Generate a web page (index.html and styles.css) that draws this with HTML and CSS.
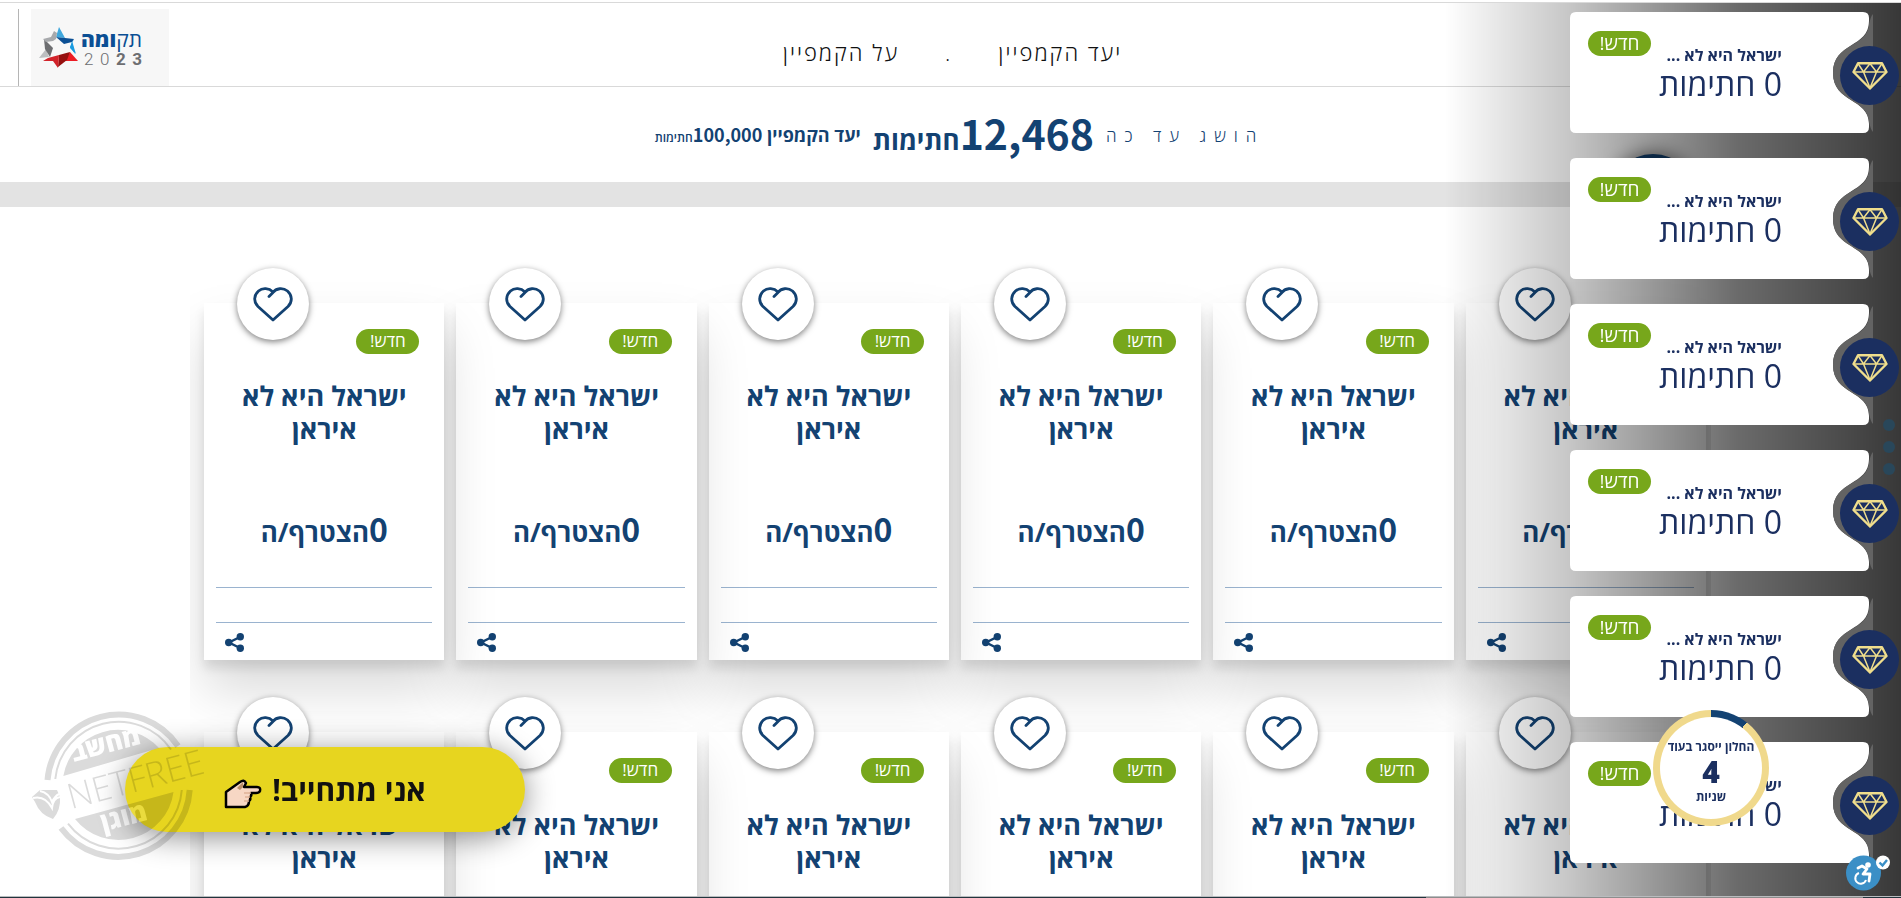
FILE: index.html
```html
<!DOCTYPE html>
<html lang="he" dir="rtl">
<head>
    <meta charset="UTF-8">
    <meta name="viewport" content="width=device-width, initial-scale=1.0">
    <title>תקומה 2023</title>
    <link rel="stylesheet" href="styles.css">
</head>
<body>
    <svg class="defs" aria-hidden="true">
        <symbol id="icon-heart" viewBox="0 0 40 35">
            <path d="M16 9.500L20 5.500C23 1 30 0.500 34.500 4C39.500 8.500 39.500 15 35 19.500L20 33L5 19.500C0.500 15 0.500 8.500 5.500 4C9.500 0.500 16 1 20 5" fill="none" stroke="currentColor" stroke-width="2.800" stroke-linejoin="round" stroke-linecap="round"/>
        </symbol>
        <symbol id="icon-share" viewBox="0 0 19 19">
            <path d="M15 4L4 9.500L15 15" fill="none" stroke="currentColor" stroke-width="2.500"/>
            <circle cx="15.300" cy="3.700" r="3.700"/><circle cx="3.700" cy="9.500" r="3.700"/><circle cx="15.300" cy="15.300" r="3.700"/>
        </symbol>
        <symbol id="icon-diamond" viewBox="0 0 36 28">
            <path d="M6 1.200H30L34.500 10L18 26.500L1.500 10Z" fill="none" stroke="currentColor" stroke-width="2.400" stroke-linejoin="round"/>
            <path d="M2 10H34M6 1.500L11.500 10L18 1.500L24.500 10L30 1.500M11.500 10L18 26L24.500 10" fill="none" stroke="currentColor" stroke-width="1.500"/>
        </symbol>
        <symbol id="ticket" viewBox="0 0 303 121">
            <path d="M6 0H293Q299 0 299 6V9C299 36 263 30 263 61C263 91 299 86 299 112V115Q299 121 293 121H6Q0 121 0 115V6Q0 0 6 0Z" fill="#fff"/>
            <path d="M303 2C301 4 300 8 299 12C298 36 263 30 263 61C263 91 298 86 299 110C300 114 301 118 303 120Z" fill="#636363"/>
        </symbol>
    </svg>

    <header class="header">
        <nav class="nav">
            <a href="#goal">יעד הקמפיין</a>
            <span>.</span>
            <a href="#about">על הקמפיין</a>
        </nav>
        <a class="logo" href="#">
            <svg class="logo-star" viewBox="0 0 39 41" aria-hidden="true">
                <path d="M20 0L26 11L17 10Z" fill="#3fa7dc"/>
                <path d="M17 10L35 12L33 15L25 17Z" fill="#0b4f94"/>
                <path d="M35 12L31 20L36 27L33 15Z" fill="#1a9be0"/>
                <path d="M33 14L31 21L37 27Z" fill="#1a9be0"/>
                <path d="M31 25L39 34L26 34Z" fill="#ec1c24"/>
                <path d="M31 25L20 28L19 40L28 33Z" fill="#96100f"/>
                <path d="M4 34L9 31L20 28L19 41L14 34Z" fill="#d2232a"/>
                <path d="M7 22L0 31L10 30Z" fill="#bcbec0"/>
                <path d="M5 12L14 21L11 30L6 22Z" fill="#6d6e71"/>
                <path d="M4 12L12 10L15 4L18 6L17 12L14 14L7 15Z" fill="#a7a9ac"/>
            </svg>
            <span class="logo-text">
                <span class="logo-name"><span>תק</span>ומה</span>
                <span class="logo-year"><i>2</i><i>0</i><b>2</b><b>3</b></span>
            </span>
        </a>
    </header>

    <section class="stats" id="goal">
        <span class="stats-label">הושג עד כה</span>
        <strong class="stats-total"><span class="num">12,468</span>חתימות</strong>
        <strong class="stats-goal">יעד הקמפיין <span class="num">100,000</span><small>חתימות</small></strong>
    </section>
    <div class="band"></div>

    <main class="cards" id="cards"></main>

    <button class="cta" type="button">
        <span>אני מתחייב!</span>
        <svg class="cta-hand" viewBox="0 0 38 30" aria-hidden="true">
            <path d="M2 27V13L16 3Q20 0 22 4L20 8H33Q37 8 36 12Q35 14 32 14H27Q28 17 26 18Q27 21 25 22Q25 27 21 28H2Z" fill="#f7d7c4" stroke="#000" stroke-width="2.500" stroke-linejoin="round"/>
            <path d="M13 9L19 3L19 8L16 11Z" fill="#b98d68"/>
            <path d="M20 14H27M21 18H26M20 22H25" stroke="#e0b396" stroke-width="1.500"/>
        </svg>
    </button>

    <svg class="stamp" viewBox="0 0 180 150" aria-hidden="true" direction="ltr">
        <g fill="none" stroke="#000">
            <path d="M15.500 70A71.500 71.500 0 0 1 146 36" stroke-width="6"/>
            <path d="M157.700 80A71.500 71.500 0 0 1 29 118" stroke-width="6"/>
            <path d="M23.300 69A63.500 63.500 0 0 1 139 39.500" stroke-width="2"/>
            <path d="M149.800 80A63.500 63.500 0 0 1 36 113.600" stroke-width="2"/>
        </g>
        <path d="M31.300 66A55.500 55.500 0 0 1 127 38Z"/>
        <path d="M141.500 82A55.500 55.500 0 0 1 43 109Z"/>
        <path d="M8 80H25L28 87Q29 100 21 109Q8 105 3 92L0 87Z"/>
        <path d="M1 88Q13 85 20 98Q21 88 28 87M8 81Q17 83 20 92Q23 86 27 84" fill="none" stroke="#fff" stroke-width="2"/>
        <g transform="rotate(-15 83 74)">
            <text class="stamp-heb" x="84" y="42" text-anchor="middle">מחשב</text>
            <text class="stamp-net" x="34" y="87">NETFREE</text>
            <text class="stamp-heb" x="83" y="117" text-anchor="middle">מוגן</text>
        </g>
    </svg>

    <div class="menu-circle"></div>
    <aside class="panel" id="panel"></aside>
    <div class="side-dots"><i></i><i></i><i></i></div>

    <div class="timer">
        <div class="timer-inner">
            <span>החלון ייסגר בעוד</span>
            <b>4</b>
            <span>שניות</span>
        </div>
    </div>

    <button class="access" type="button" aria-label="נגישות">
        <svg viewBox="0 0 44 36" aria-hidden="true">
            <circle cx="17.500" cy="18" r="17.500" fill="#3b8fc6"/>
            <circle cx="22" cy="10" r="2.800" fill="#fff"/>
            <path d="M12 13L16 11L21 14L17 19H24L23 26" fill="none" stroke="#fff" stroke-width="2.800" stroke-linejoin="round" stroke-linecap="round"/>
            <path d="M13 18A5.500 5.500 0 1 0 20 25" fill="none" stroke="#fff" stroke-width="2"/>
            <circle cx="37" cy="7.500" r="7" fill="#fff"/>
            <path d="M33.500 7.500L36.500 10.500L41 5" fill="none" stroke="#3b8fc6" stroke-width="2.400"/>
        </svg>
    </button>

    <footer class="bottom-line"></footer>

    <script>
        const cards = document.getElementById('cards');
        const panel = document.getElementById('panel');

        for (let i = 0; i < 12; i++) {
            cards.innerHTML += `
                <article class="card">
                    <button class="like" type="button" aria-label="אהבתי"><svg><use href="#icon-heart"/></svg></button>
                    <span class="badge">חדש!</span>
                    <h3>ישראל היא לא איראן</h3>
                    <p class="joined"><span class="num">0</span>הצטרף/ה</p>
                    <div class="card-line"></div>
                    <div class="card-foot">
                        <button class="share" type="button" aria-label="שיתוף"><svg><use href="#icon-share"/></svg></button>
                    </div>
                </article>
            `;
        }

        for (let i = 0; i < 6; i++) {
            panel.innerHTML += `
                <div class="notice">
                    <svg class="notice-bg"><use href="#ticket"/></svg>
                    <span class="notice-icon"><svg><use href="#icon-diamond"/></svg></span>
                    <div class="notice-text">
                        <b>ישראל היא לא ...</b>
                        <span>0 חתימות</span>
                    </div>
                    <span class="badge">חדש!</span>
                </div>
            `;
        }
    </script>
</body>
</html>
```
FILE: styles.css
```css
* {
    box-sizing: border-box;
}
body {
    margin: 0;
    padding-top: 2px;
    height: 100vh;
    overflow: hidden;
    font-family: "Open Sans", sans-serif;
    background-color: #fff;
    color: #134272;
}
button {
    border: 0;
    padding: 0;
    background: none;
    font-family: inherit;
    color: inherit;
    cursor: pointer;
}
.defs {
    position: absolute;
    width: 0;
    height: 0;
}
.num {
    font-family: "Noto Sans CJK JP", sans-serif;
}

/* header */
.header {
    position: relative;
    display: flex;
    justify-content: center;
    align-items: center;
    height: 85px;
    border-top: 1px solid #d9d9d9;
    border-bottom: 1px solid #d9d9d9;
}
.nav {
    display: flex;
    gap: 46px;
    padding: 14px 0 0 4px;
    font-size: 22px;
    font-weight: 300;
    letter-spacing: 2px;
    color: #111;
}
.nav a {
    color: inherit;
    text-decoration: none;
}
.logo {
    position: absolute;
    left: 31px;
    bottom: 0;
    display: flex;
    align-items: center;
    gap: 6px;
    width: 138px;
    height: 77px;
    padding: 0 8px;
    background-color: #f7f7f7;
    text-decoration: none;
    direction: ltr;
}
.logo::before {
    content: "";
    position: absolute;
    left: -13px;
    top: 0;
    bottom: 0;
    border-left: 1px solid #b5b5b5;
}
.logo-star {
    width: 39px;
    height: 41px;
}
.logo-text {
    display: flex;
    flex-direction: column;
    width: 58px;
}
.logo-name {
    direction: rtl;
    font-size: 21px;
    line-height: 24px;
    font-weight: 800;
    white-space: nowrap;
    color: #0b4f94;
}
.logo-name span {
    font-weight: 400;
}
.logo-year {
    display: flex;
    justify-content: space-between;
    font: 17px/17px Roboto, sans-serif;
    color: #6d6e71;
}
.logo-year i {
    font-style: normal;
    font-weight: 300;
}

/* totals */
.stats {
    display: flex;
    justify-content: center;
    align-items: center;
    gap: 12px;
    height: 95px;
    padding: 3px 0 0 18px;
    line-height: 48px;
}
.stats-label {
    font-size: 17px;
    font-weight: 300;
    letter-spacing: 8px;
}
.stats-total {
    font-size: 26px;
}
.stats-total .num {
    font-size: 41px;
}
.stats-goal {
    font-size: 18px;
}
.stats-goal small {
    font-size: 12px;
    font-weight: 600;
}
.band {
    height: 25px;
    background-color: #e3e3e3;
}

/* cards */
.cards {
    display: grid;
    grid-template-columns: repeat(6, 1fr);
    gap: 72px 12px;
    width: 80%;
    margin: 0 auto;
    padding: 96px 5px 60px 14px;
    overflow: hidden;
}
.card {
    position: relative;
    display: flex;
    flex-direction: column;
    height: 357px;
    padding: 26px 12px 0;
    background-color: #fff;
    box-shadow: 0 30px 50px rgba(0, 0, 0, 0.15), 0 8px 10px rgba(0, 0, 0, 0.1);
}
.badge {
    display: block;
    width: 63px;
    height: 25px;
    border-radius: 13px;
    background-color: #77a71b;
    color: #fff;
    font-size: 17px;
    line-height: 24px;
    text-align: center;
}
.card .badge {
    margin-right: 13px;
}
.card h3 {
    width: 190px;
    height: 66px;
    margin: 25px auto 0;
    font-size: 27px;
    line-height: 33px;
    font-weight: 700;
    text-align: center;
}
.joined {
    margin: 62px 0 0;
    font-size: 26px;
    line-height: 42px;
    font-weight: 700;
    text-align: center;
}
.joined .num {
    font-size: 32px;
}
.card-line {
    height: 36px;
    margin-top: auto;
    border-top: 1px solid #9ab3cf;
    border-bottom: 1px solid #9ab3cf;
}
.card-foot {
    display: flex;
    justify-content: flex-end;
    height: 37px;
    padding: 10px 9px;
}
.share,
.share svg {
    display: block;
    width: 19px;
    height: 19px;
    fill: currentColor;
}
.like {
    position: absolute;
    left: 33px;
    top: -35px;
    display: flex;
    justify-content: center;
    align-items: center;
    width: 72px;
    height: 72px;
    border-radius: 50%;
    background-color: #fff;
    box-shadow: 0 2px 6px rgba(0, 0, 0, 0.5);
}
.like svg {
    width: 40px;
    height: 35px;
}

/* floating call to action */
.cta {
    position: fixed;
    left: 125px;
    bottom: 66px;
    display: flex;
    justify-content: center;
    align-items: center;
    gap: 10px;
    width: 400px;
    height: 85px;
    border-radius: 43px;
    background-color: #e7d51f;
    color: #111;
    font-size: 30px;
    font-weight: 700;
    box-shadow: 0 5px 30px rgba(0, 0, 0, 0.45);
}
.cta-hand {
    width: 38px;
    height: 30px;
    margin-top: 8px;
}
.stamp {
    position: fixed;
    left: 32px;
    bottom: 38px;
    width: 180px;
    height: 150px;
    opacity: 0.14;
}
.stamp-heb {
    font-size: 26px;
    font-weight: 800;
    fill: #fff;
}
.stamp-net {
    font: 300 35px "Open Sans", sans-serif;
}

/* notifications */
.menu-circle {
    position: fixed;
    top: 154px;
    right: 205px;
    width: 86px;
    height: 86px;
    border-radius: 50%;
    background-color: #134272;
    box-shadow: 0 0 20px rgba(0, 0, 0, 0.6);
}
.panel {
    position: fixed;
    top: 3px;
    right: 0;
    bottom: 0;
    display: flex;
    flex-direction: column;
    gap: 25px;
    width: 24%;
    padding: 9px 2px 0;
    background: linear-gradient(to left, rgba(0, 0, 0, 0.78), rgba(0, 0, 0, 0.71) 12%, rgba(0, 0, 0, 0.58) 36%, rgba(0, 0, 0, 0.22) 73%, transparent);
}
.notice {
    position: relative;
    flex: none;
    width: 329px;
    height: 121px;
    padding: 33px 117px 0 0;
    color: #1b2f60;
}
.notice-bg {
    position: absolute;
    left: 0;
    top: 0;
    width: 303px;
    height: 121px;
}
.notice-icon {
    position: absolute;
    right: 0;
    top: 34px;
    display: flex;
    justify-content: center;
    align-items: center;
    width: 59px;
    height: 59px;
    border-radius: 50%;
    background-color: #1b2f60;
    color: #f0de8c;
}
.notice-icon svg {
    width: 36px;
    height: 28px;
}
.notice-text {
    position: relative;
    display: flex;
    flex-direction: column;
    white-space: nowrap;
}
.notice-text b {
    font-size: 16px;
    line-height: 20px;
    font-weight: 700;
}
.notice-text span {
    font-size: 32px;
    line-height: 38px;
    font-weight: 500;
}
.notice .badge {
    position: absolute;
    left: 18px;
    top: 19px;
    font-size: 19px;
}
.side-dots {
    position: fixed;
    right: 6px;
    top: 419px;
    display: grid;
    gap: 10px;
}
.side-dots i {
    width: 12px;
    height: 12px;
    border-radius: 50%;
    background-color: #29475a;
}
.timer {
    position: fixed;
    right: 132px;
    bottom: 72px;
    width: 116px;
    height: 116px;
    padding: 7px;
    border-radius: 50%;
    background: conic-gradient(#134272 38deg, #f0d98c 38deg);
}
.timer-inner {
    display: flex;
    flex-direction: column;
    justify-content: center;
    align-items: center;
    height: 100%;
    padding-top: 8px;
    border-radius: 50%;
    background-color: #fff;
    color: #1b2f60;
    font-size: 12px;
    line-height: 16px;
    font-weight: 700;
    white-space: nowrap;
}
.timer-inner b {
    font-size: 30px;
    line-height: 34px;
    font-weight: 800;
}
.access {
    position: fixed;
    right: 11px;
    bottom: 7px;
    width: 44px;
    height: 36px;
}
.access svg {
    display: block;
    width: 44px;
    height: 36px;
}
.bottom-line {
    position: fixed;
    left: 0;
    right: 0;
    bottom: 0;
    height: 2px;
    border-top: 1px solid #b9bcbe;
    background: linear-gradient(to right, #22343d 75%, #8d8d8d 75%, #8d8d8d 98%, #22343d 98%);
}
```
